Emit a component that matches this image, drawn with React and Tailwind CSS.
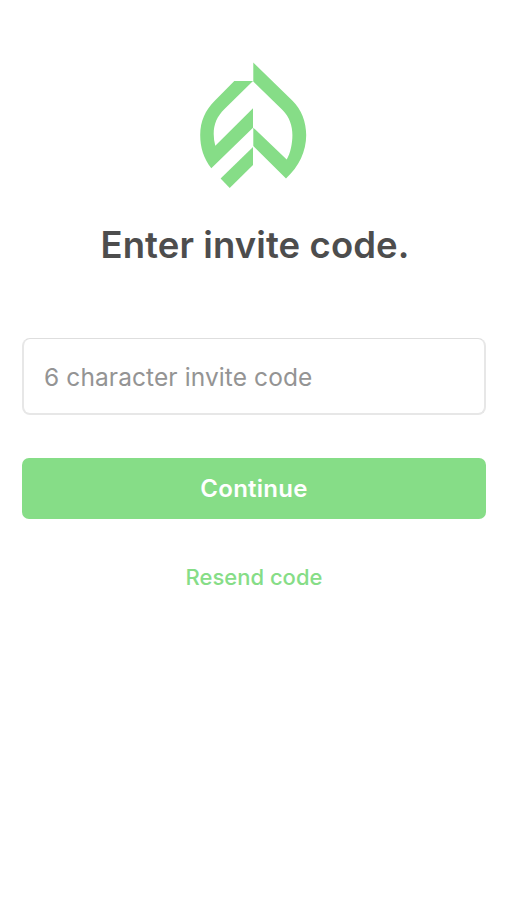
function Logo() {
  return (
    <svg className="mr-0.5 h-[130px] w-[110px]" viewBox="198 60 110 130" fill="#86dd87" aria-hidden="true">
      <path d="M234.3 81H253L224.500 109C217 116.500 213.700 124 213.700 134Q213.700 140 215.300 145.700L253 108.300V127.700L211.300 168.200C203.500 158.500 200.200 147 200.200 135C200.200 121 205.500 110.200 214.500 101Z" />
      <path d="M253 147V165L229.700 188L220.600 178.500Z" />
      <path d="M253.300 62.500L292.500 100.700C301.500 109.500 306.200 122 306.200 135C306.200 151.500 299 166.500 286 178.400L253.300 146V127.700L286.700 159.500C290.500 153 292.400 143.500 292.400 135C292.400 126 289.500 117 282.500 110L253.300 81.500Z" />
    </svg>
  );
}

export default function App() {
  return (
    <main className="flex h-[900px] w-[507px] flex-col items-center bg-white pt-[60px] pl-[22px] pr-[21px] font-['Inter',sans-serif]">
      <Logo />
      <h1 className="mt-[31px] ml-0.5 h-12 whitespace-nowrap text-[36.5px] leading-[48px] font-semibold tracking-[0.1px] text-[#4d4d4d]">
        Enter invite code.
      </h1>
      <input
        type="text"
        maxLength={6}
        placeholder="6 character invite code"
        className="mt-[69px] h-[77px] w-full rounded-lg border-2 border-t border-[#e7e7e7] border-t-[#dedede] bg-white px-5 pt-0.5 text-[24.5px] tracking-[0.1px] text-[#4d4d4d] outline-none placeholder:text-[#949494]"
      />
      <button className="mt-[43px] h-[61px] w-full rounded-[7px] bg-[#86dd87] text-[24px] font-semibold tracking-[0.25px] text-white">
        Continue
      </button>
      <button className="mt-[42px] h-8 whitespace-nowrap text-[22px] leading-8 font-medium text-[#86dd87]">
        Resend code
      </button>
    </main>
  );
}
